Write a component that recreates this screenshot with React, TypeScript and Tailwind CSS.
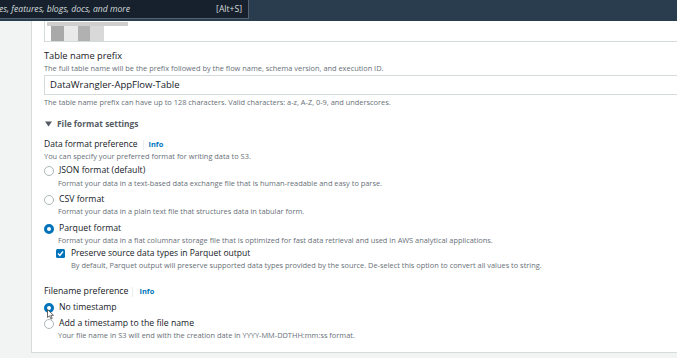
import React from "react";

const F = { fontFamily: '"Open Sans", "Liberation Sans", sans-serif' };

function Radio({ checked }: { checked?: boolean }) {
  return checked ? (
    <span className="box-border inline-block h-[10px] w-[10px] shrink-0 rounded-full border-[3px] border-[#0073bb] bg-white" />
  ) : (
    <span className="box-border inline-block h-[10px] w-[10px] shrink-0 rounded-full border border-[#aab7b8] bg-white" />
  );
}

function Desc({ children, h = "h-[12px]", pl = "" }: { children: React.ReactNode; h?: string; pl?: string }) {
  return (
    <div className={`flex items-center whitespace-nowrap text-[7.4px] text-[#687078] ${h} ${pl}`}>{children}</div>
  );
}

function Label({ children, h = "h-[14px]", mt = "", size = "text-[8.7px]" }: { children: React.ReactNode; h?: string; mt?: string; size?: string }) {
  return (
    <div className={`flex items-center whitespace-nowrap text-[#16191f] ${size} ${h} ${mt}`}>{children}</div>
  );
}

function Opt({ children }: { children: React.ReactNode }) {
  return <span className="whitespace-nowrap text-[8.7px] text-[#16191f]">{children}</span>;
}

export default function App() {
  return (
    <div className="relative h-[358px] w-[677px] overflow-hidden bg-[#f2f3f3]" style={F}>
      {/* top bar */}
      <div className="flex h-[21px] w-full items-start bg-[#2a3d4f]">
        <div className="flex h-[19px] w-[249px] items-center justify-between border-b border-r border-[#55626f] bg-[#16212d] pr-[6px]">
          <span className="-ml-[1px] whitespace-nowrap text-[8.6px] italic text-[#d5dbdb]">es, features, blogs, docs, and more</span>
          <span className="text-[8.6px] text-[#d5dbdb]">[Alt+S]</span>
        </div>
      </div>
      <div className="flex">
        <div className="w-[31px] shrink-0" />
        <div className="flex-1 border-b border-l border-[#d5dbdb] bg-white pb-[10px] pl-[12px]">
          {/* blurred input */}
          <div className="relative h-[21px] border-b border-l border-[#d5dbdb]">
            <div className="absolute left-[2px] top-[1px] h-[4px] w-[81px] bg-[#cfcfcf]" />
            <div className="absolute left-[6px] top-[5px] flex h-[15px]">
              <div className="w-[13px] bg-[#a9a9a9]" />
              <div className="w-[14px] bg-[#e9e9e9]" />
              <div className="w-[12px] bg-[#b1b1b1]" />
              <div className="w-[14px] bg-[#d9d9d9]" />
            </div>
          </div>
          <Label mt="mt-[7px]" size="text-[9.3px]">Table name prefix</Label>
          <Desc>The full table name will be the prefix followed by the flow name, schema version, and execution ID.</Desc>
          <div className="box-border flex h-[20px] items-center border border-r-0 border-[#d5dbdb] pl-[5px] text-[9.5px] text-[#16191f]">
            DataWrangler-AppFlow-Table
          </div>
          <div className="mt-[2px]">
            <Desc>The table name prefix can have up to 128 characters. Valid characters: a-z, A-Z, 0-9, and underscores.</Desc>
          </div>
          <div className="mt-[8px] flex h-[14px] items-center gap-[5px] whitespace-nowrap text-[8.4px] font-bold text-[#545b64]">
            <svg width="7" height="6" viewBox="0 0 7 6" className="ml-[1px]">
              <path d="M0 0.5 H7 L3.5 5.5 Z" fill="#545b64" />
            </svg>
            <span>File format settings</span>
          </div>
          <Label mt="mt-[7px]" h="h-[13px]" size="text-[8.5px]">
            Data format preference
            <span className="ml-[5px] mr-[5px] h-[10px] w-px bg-[#eaeded]" />
            <span className="text-[7.4px] font-bold text-[#0073bb]">Info</span>
          </Label>
          <Desc>You can specify your preferred format for writing data to S3.</Desc>
          <div className="mt-[1px] flex h-[14px] items-center gap-[5px]">
            <Radio />
            <Opt>JSON format (default)</Opt>
          </div>
          <Desc pl="pl-[14px]">Format your data in a text-based data exchange file that is human-readable and easy to parse.</Desc>
          <div className="mt-[3px] flex h-[13px] items-center gap-[5px]">
            <Radio />
            <Opt>CSV format</Opt>
          </div>
          <Desc pl="pl-[14px]">Format your data in a plain text file that structures data in tabular form.</Desc>
          <div className="mt-[4px] flex h-[13px] items-center gap-[5px]">
            <Radio checked />
            <Opt>Parquet format</Opt>
          </div>
          <Desc pl="pl-[14px]" h="h-[11px]">
            Format your data in a flat columnar storage file that is optimized for fast data retrieval and used in AWS analytical applications.
          </Desc>
          <div className="flex h-[14px] items-center gap-[6px] pl-[12px]">
            <span className="flex h-[9px] w-[9px] items-center justify-center rounded-[1.5px] bg-[#0073bb]">
              <svg width="7" height="7" viewBox="0 0 7 7">
                <path d="M1 3.6 L2.9 5.4 L6 1.5" fill="none" stroke="white" strokeWidth="1.4" />
              </svg>
            </span>
            <span className="whitespace-nowrap text-[8.5px] text-[#16191f]">Preserve source data types in Parquet output</span>
          </div>
          <Desc pl="pl-[27px]">
            By default, Parquet output will preserve supported data types provided by the source. De-select this option to convert all values to string.
          </Desc>
          <Label mt="mt-[13px]" size="text-[8.8px]">
            Filename preference
            <span className="ml-[4px] mr-[6px] h-[10px] w-px bg-[#eaeded]" />
            <span className="text-[7.4px] font-bold text-[#0073bb]">Info</span>
          </Label>
          <div className="relative mt-[2px] flex h-[14px] items-center gap-[5px]">
            <Radio checked />
            <Opt>No timestamp</Opt>
            <svg className="absolute left-[3px] top-[8px]" width="8" height="11" viewBox="0 0 8 11">
              <path d="M0.5 0.5 L0.5 8.5 L2.5 6.8 L4 10 L5.2 9.4 L3.8 6.3 L6.5 6.3 Z" fill="white" stroke="#444" strokeWidth="0.8" />
            </svg>
          </div>
          <div className="mt-[2px] flex h-[13px] items-center gap-[5px]">
            <Radio />
            <Opt>Add a timestamp to the file name</Opt>
          </div>
          <Desc pl="pl-[14px]">Your file name in S3 will end with the creation date in YYYY-MM-DDTHH:mm:ss format.</Desc>
        </div>
      </div>
    </div>
  );
}
